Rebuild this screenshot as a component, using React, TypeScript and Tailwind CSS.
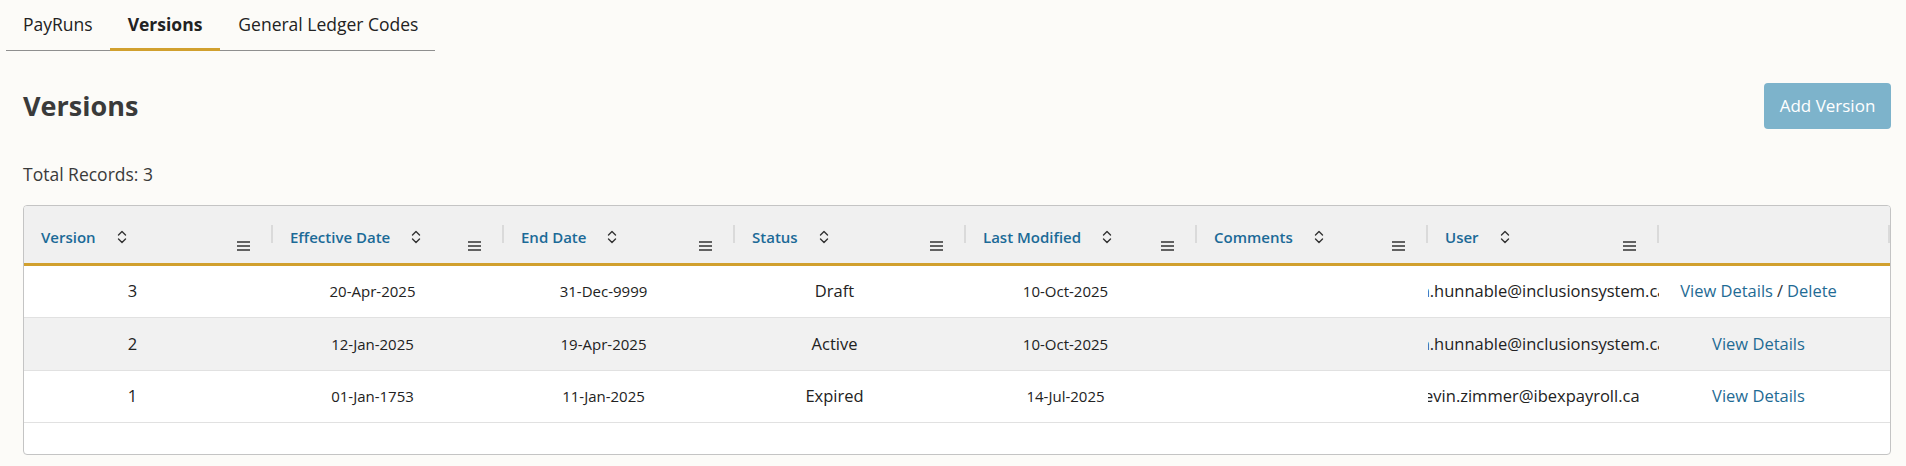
import React from "react"

const cols = [
  { key: "version", label: "Version" },
  { key: "effective", label: "Effective Date" },
  { key: "end", label: "End Date" },
  { key: "status", label: "Status" },
  { key: "modified", label: "Last Modified" },
  { key: "comments", label: "Comments" },
  { key: "user", label: "User" },
]

const rows = [
  { version: "3", effective: "20-Apr-2025", end: "31-Dec-9999", status: "Draft", modified: "10-Oct-2025", comments: "", user: "jason.hunnable@inclusionsystem.ca", canDelete: true },
  { version: "2", effective: "12-Jan-2025", end: "19-Apr-2025", status: "Active", modified: "10-Oct-2025", comments: "", user: "jason.hunnable@inclusionsystem.ca", canDelete: false },
  { version: "1", effective: "01-Jan-1753", end: "11-Jan-2025", status: "Expired", modified: "14-Jul-2025", comments: "", user: "kevin.zimmer@ibexpayroll.ca", canDelete: false },
]

function SortIcon() {
  return (
    <svg width="12" height="16" viewBox="0 0 12 16" fill="none" stroke="#333" strokeWidth="1.4" strokeLinecap="round" strokeLinejoin="round">
      <path d="M2.5 6 6 2.5 9.5 6" />
      <path d="M2.5 10 6 13.5 9.5 10" />
    </svg>
  )
}

function MenuIcon() {
  return (
    <svg width="13" height="10" viewBox="0 0 13 10" fill="none" stroke="#333" strokeWidth="1.3">
      <path d="M0 1h13M0 5h13M0 9h13" />
    </svg>
  )
}

function HeaderCell({ label }: { label?: string }) {
  return (
    <div className="relative h-full pl-[17px] pt-[21px]">
      {label && (
        <div className="flex items-center">
          <span className="text-[15px] leading-[20px] font-semibold text-[#1b6a97]">{label}</span>
          <span className="ml-[20px] flex items-center">
            <SortIcon />
          </span>
        </div>
      )}
      {label && (
        <span className="absolute right-[23px] top-[35px] flex">
          <MenuIcon />
        </span>
      )}
      <span className="absolute right-0 top-[19px] h-[18px] w-[2px] bg-[#dadada]" />
    </div>
  )
}

function Cell({ children, date }: { children?: React.ReactNode; date?: boolean }) {
  return (
    <div
      className={`flex h-full items-center justify-center overflow-hidden whitespace-nowrap pr-[32px] text-[#222] ${date ? "text-[15px]" : "text-[16.5px]"}`}
    >
      {children}
    </div>
  )
}

export default function App() {
  return (
    <div className="min-h-screen bg-[#fcfbf8] font-['Open_Sans',sans-serif] text-[#333]">
      <div className="ml-[6px] flex w-[429px] border-b border-[#8f8f8f]">
        <div className="-mb-px flex h-[51px] items-center border-b-[3px] border-transparent pl-[17px] pr-[17px] text-[17.5px] text-[#222]">
          PayRuns
        </div>
        <div className="-mb-px flex h-[51px] items-center border-b-[3px] border-[#d1a02e] px-[18px] text-[17.5px] font-bold text-[#222]">
          Versions
        </div>
        <div className="-mb-px flex h-[51px] items-center border-b-[3px] border-transparent pl-[18px] pr-[10px] text-[17.5px] text-[#222]">
          General Ledger Codes
        </div>
      </div>

      <div className="pl-[23px] pr-[15px]">
        <div className="mt-[32px] flex items-center justify-between">
          <h1 className="text-[27px] font-bold leading-[36px] text-[#3a3a3a]">Versions</h1>
          <button className="h-[46px] w-[127px] rounded-[4px] bg-[#7db3cb] text-[17px] text-white">Add Version</button>
        </div>

        <div className="mt-[33px] text-[17.5px] leading-[24px] text-[#3a3a3a]">Total Records: 3</div>

        <div className="mt-[19px] overflow-hidden rounded-[4px] border border-[#c4c4c4] bg-white">
          <div className="grid h-[60px] grid-cols-[249px_repeat(6,231px)_1fr] border-b-[3px] border-[#d1a02e] bg-[#f0f0f0]">
            {cols.map((c) => (
              <HeaderCell key={c.key} label={c.label} />
            ))}
            <HeaderCell />
          </div>
          {rows.map((r, i) => (
            <div
              key={r.version}
              className={`grid grid-cols-[249px_repeat(6,231px)_1fr] border-b border-[#e1e1e1] ${i === 1 ? "h-[53px] bg-[#f1f1f1]" : "h-[52px] bg-white"}`}
            >
              <Cell>{r.version}</Cell>
              <Cell date>{r.effective}</Cell>
              <Cell date>{r.end}</Cell>
              <Cell>{r.status}</Cell>
              <Cell date>{r.modified}</Cell>
              <Cell>{r.comments}</Cell>
              <Cell>{r.user}</Cell>
              <Cell>
                <span className="text-[#1f6b94]">View Details</span>
                {r.canDelete && (
                  <>
                    <span className="mx-[4px] text-[#333]">/</span>
                    <span className="text-[#1f6b94]">Delete</span>
                  </>
                )}
              </Cell>
            </div>
          ))}
          <div className="h-[31px]" />
        </div>
      </div>
    </div>
  )
}
